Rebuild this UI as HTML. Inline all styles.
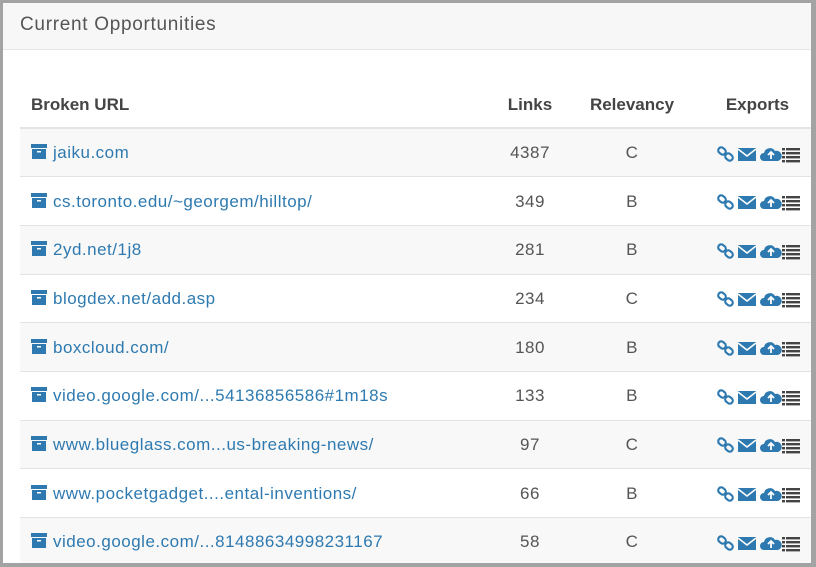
<!DOCTYPE html>
<html><head><meta charset="utf-8"><style>
*{margin:0;padding:0;box-sizing:border-box}
html,body{width:816px;height:567px;overflow:hidden;background:#a3a3a3}
body{font-family:"Liberation Sans",sans-serif;position:relative}
.panel{position:absolute;left:3px;top:3px;width:808px;height:560px;background:#fff;overflow:hidden}
.hdr{height:47px;background:#f7f7f7;border-bottom:1px solid #e6e6e6;font-size:19px;letter-spacing:0.7px;color:#555;padding:11px 0 0 17px}
table{position:absolute;left:17px;top:79px;width:791px;border-collapse:collapse}
th{font-size:17px;color:#444;font-weight:bold;height:46px;border-bottom:2px solid #e4e4e4;text-align:center;padding:0}
th.u{text-align:left;padding-left:11px}
td{height:48.7px;border-bottom:1px solid #e3e3e3;font-size:17px;letter-spacing:0.5px;color:#555;text-align:center;padding:1px 0 0 0}
tr:nth-child(odd) td{background:#f8f8f8}
td.u{text-align:left;padding-left:11px;color:#2e7ab0}
td.u svg{vertical-align:-1px;margin-right:6px}
.ex svg{vertical-align:middle}
</style></head><body>
<div class="panel">
<div class="hdr">Current Opportunities</div>
<table>
<colgroup><col style="width:470px"><col style="width:80px"><col style="width:124px"><col></colgroup>
<thead><tr><th class="u">Broken URL</th><th>Links</th><th>Relevancy</th><th style="padding-left:10px">Exports</th></tr></thead>
<tbody id="b"></tbody>
</table>
</div>
<script>
var rows=[["jaiku.com",4387,"C"],["cs.toronto.edu/~georgem/hilltop/",349,"B"],["2yd.net/1j8",281,"B"],["blogdex.net/add.asp",234,"C"],["boxcloud.com/",180,"B"],["video.google.com/...54136856586#1m18s",133,"B"],["www.blueglass.com...us-breaking-news/",97,"C"],["www.pocketgadget....ental-inventions/",66,"B"],["video.google.com/...81488634998231167",58,"C"]];
var box='<svg width="16" height="15" viewBox="0 0 16 15"><rect x="0" y="0" width="16" height="4" fill="#2e7ab0"/><rect x="1" y="5" width="14" height="10" fill="#2e7ab0"/><rect x="6" y="7" width="4" height="1.5" fill="#fff"/></svg>';
var ex='<svg width="84" height="18" viewBox="0 0 84 18"><g fill="none" stroke="#2e7ab0" stroke-width="2.2"><rect x="1" y="3" width="8" height="6" rx="3" transform="rotate(40 5 6)"/><rect x="8" y="9" width="8" height="6" rx="3" transform="rotate(40 12 12)"/></g><rect x="21" y="3" width="18" height="13" fill="#2e7ab0"/><path d="M21 4 L30 11 L39 4" stroke="#fff" stroke-width="1.5" fill="none"/><path d="M47 16 a4 4 0 0 1 0-8 a6 6 0 0 1 11-2 a4.5 4.5 0 0 1 3 10z" fill="#2e7ab0"/><path d="M54 14 v-6 M51 10 l3-3 l3 3" stroke="#fff" stroke-width="1.8" fill="none"/><g fill="#444"><rect x="65" y="3" width="3" height="2.4"/><rect x="69" y="3" width="14" height="2.4"/><rect x="65" y="7" width="3" height="2.4"/><rect x="69" y="7" width="14" height="2.4"/><rect x="65" y="11" width="3" height="2.4"/><rect x="69" y="11" width="14" height="2.4"/><rect x="65" y="15" width="3" height="2.4"/><rect x="69" y="15" width="14" height="2.4"/></g></svg>';
var h='';rows.forEach(function(r){h+='<tr><td class="u">'+box+r[0]+'</td><td>'+r[1]+'</td><td>'+r[2]+'</td><td class="ex" style="text-align:right;padding-right:10px">'+ex+'</td></tr>'});
document.getElementById('b').innerHTML=h;
</script>
</body></html>
